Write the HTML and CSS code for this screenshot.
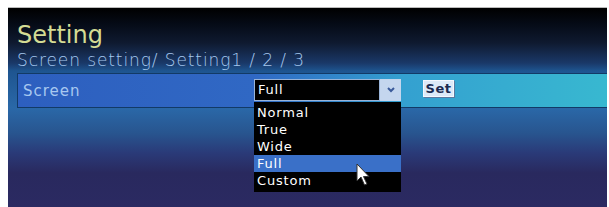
FILE: index.html
```html
<!DOCTYPE html>
<html lang="en">

<head>
    <meta charset="UTF-8">
    <title>Setting</title>
    <link rel="stylesheet" href="styles.css">
</head>

<body>
    <div class="panel">
        <h1 class="title">Setting</h1>
        <div class="subtitle">Screen setting/ Setting1 / 2 / 3</div>
        <div class="setting-row">
            <span class="row-label">Screen</span>
            <div class="select">
                <div class="select-value">Full</div>
                <div class="select-arrow">
                    <svg width="10" height="8" viewBox="0 0 10 8">
                        <path d="M2 2 L5 5 L8 2" fill="none" stroke="#3a5a9a" stroke-width="2"/>
                    </svg>
                </div>
                <ul class="select-list">
                    <li>Normal</li>
                    <li>True</li>
                    <li>Wide</li>
                    <li class="selected">Full</li>
                    <li>Custom</li>
                </ul>
                <svg class="cursor" width="14" height="24" viewBox="0 0 14 24">
                    <path d="M1 1 L1 18 L5 14 L8.5 22 L11 21 L7.5 13.5 L13 13.5 Z" fill="#fff" stroke="#333" stroke-width="1"/>
                </svg>
            </div>
            <button class="btn-set">Set</button>
        </div>
    </div>
</body>

</html>
```

FILE: styles.css
```css
body {
    margin: 0;
    background-color: #fff;
    font-family: "DejaVu Sans", sans-serif;
}

.panel {
    margin: 7px 0 0 8px;
    width: 599px;
    height: 200px;
    box-sizing: border-box;
    padding: 13px 0 0 9px;
    border-top: 1px solid #bbb;
    background: linear-gradient(180deg,
        #000 0px, #050a15 15px, #0f1a30 35px, #1a3868 55px, #1e5590 63px,
        #2a68a8 100px, #28558f 125px, #2a3a78 145px, #29295e 165px, #2b2a62 200px);
}

.title {
    margin: 0;
    font-size: 24px;
    font-weight: normal;
    line-height: 28px;
    color: #d4dc94;
}

.subtitle {
    font-size: 17px;
    line-height: 23px;
    letter-spacing: 0.9px;
    color: #a6c8ee;
    font-weight: 200;
}

/* 设置行 */
.setting-row {
    display: flex;
    align-items: flex-start;
    margin-top: 1px;
    padding: 5px 0 0 5px;
    box-sizing: border-box;
    border: 1px solid #123a66;
    border-right: none;
    height: 35px;
    background: linear-gradient(90deg, #2d5fbf 0%, #3068c4 40%, #34a0d0 65%, #38b8d0 100%);
}

.row-label {
    width: 231px;
    font-size: 15px;
    line-height: 24px;
    letter-spacing: 1px;
    color: #a8c8f0;
}

.select {
    position: relative;
    display: flex;
    height: 22px;
}

.select-value {
    width: 121px;
    height: 20px;
    border: 1px solid #9ab4d8;
    background-color: #000;
    color: #fff;
    font-size: 13px;
    line-height: 20px;
    letter-spacing: 0.8px;
    padding-left: 3px;
}

.select-arrow {
    width: 21px;
    height: 22px;
    background-color: #c4d6ee;
    display: flex;
    justify-content: center;
    align-items: center;
}

.select-list {
    position: absolute;
    top: 23px;
    left: 0;
    width: 147px;
    margin: 0;
    padding: 2px 0 3px;
    list-style: none;
    background-color: #000;
}

.select-list li {
    height: 17px;
    padding-left: 3px;
    color: #fff;
    font-size: 13px;
    line-height: 17px;
    letter-spacing: 0.8px;
}

.select-list .selected {
    background-color: #3a70c8;
}

.cursor {
    position: absolute;
    left: 102px;
    top: 84px;
}

.btn-set {
    margin-left: 22px;
    margin-top: 1px;
    width: 31px;
    height: 17px;
    padding: 0;
    border: 1px solid #f4f8ff;
    box-shadow: 1px 1px 0 #5a7aa0;
    background-color: #dceaf8;
    color: #1a2a50;
    font-family: "DejaVu Sans", sans-serif;
    font-size: 13px;
    font-weight: bold;
    line-height: 15px;
    letter-spacing: 0.5px;
}
```
